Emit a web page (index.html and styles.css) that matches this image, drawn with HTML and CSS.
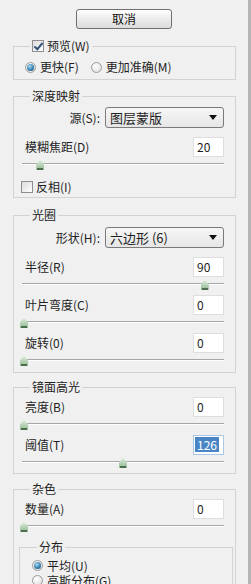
FILE: index.html
```html
<!DOCTYPE html>
<html lang="zh-CN">
<head>
    <meta charset="UTF-8">
    <meta name="viewport" content="width=device-width, initial-scale=1.0">
    <title>镜头模糊</title>
    <link rel="stylesheet" href="styles.css">
</head>
<body>
    <div class="dialog">
        <div class="top">
            <button class="btn">取消</button>
        </div>

        <fieldset class="group first">
            <legend><span class="check on"></span>预览(W)</legend>
            <div class="radios">
                <span class="opt"><span class="radio on"></span>更快(F)</span>
                <span class="opt"><span class="radio"></span>更加准确(M)</span>
            </div>
        </fieldset>

        <fieldset class="group depth">
            <legend>深度映射</legend>
            <div class="pick">
                <span class="pick-label">源(S):</span>
                <div class="select"><span>图层蒙版</span><span class="arrow"></span></div>
            </div>
            <div class="row gap"><span>模糊焦距(D)</span><span class="num">20</span></div>
            <div class="slider"><span class="thumb" style="left: 9%"></span></div>
            <div class="opt invert"><span class="check"></span>反相(I)</div>
        </fieldset>

        <fieldset class="group iris">
            <legend>光圈</legend>
            <div class="pick">
                <span class="pick-label">形状(H):</span>
                <div class="select"><span>六边形 (6)</span><span class="arrow"></span></div>
            </div>
            <div class="row gap"><span>半径(R)</span><span class="num">90</span></div>
            <div class="slider"><span class="thumb" style="left: 90.5%"></span></div>
            <div class="row"><span>叶片弯度(C)</span><span class="num">0</span></div>
            <div class="slider"><span class="thumb" style="left: 1%"></span></div>
            <div class="row"><span>旋转(0)</span><span class="num">0</span></div>
            <div class="slider"><span class="thumb" style="left: 1%"></span></div>
        </fieldset>

        <fieldset class="group specular">
            <legend>镜面高光</legend>
            <div class="row"><span>亮度(B)</span><span class="num">0</span></div>
            <div class="slider"><span class="thumb" style="left: 1%"></span></div>
            <div class="row"><span>阈值(T)</span><span class="num focus"><span class="sel">126</span></span></div>
            <div class="slider"><span class="thumb" style="left: 50%"></span></div>
        </fieldset>

        <fieldset class="group noise">
            <legend>杂色</legend>
            <div class="row"><span>数量(A)</span><span class="num">0</span></div>
            <div class="slider"><span class="thumb" style="left: 1%"></span></div>
            <fieldset class="group inner">
                <legend>分布</legend>
                <div class="opt"><span class="radio on"></span>平均(U)</div>
                <div class="opt"><span class="radio"></span>高斯分布(G)</div>
            </fieldset>
        </fieldset>
    </div>
</body>
</html>
```

FILE: styles.css
```css
body {
    margin: 0;
    background-color: #f0f0f0;
    font-family: "Noto Sans CJK SC", "Noto Sans", sans-serif;
    font-size: 12px;
    line-height: 14px;
    color: #1e1e1e;
    overflow: hidden;
}
.dialog {
    width: 248px;
    height: 584px;
    overflow: hidden;
    border-right: 3px solid #b4b4b4;
}
.top {
    padding: 9px 0 0 76px;
    height: 20px;
}
.btn {
    display: block;
    width: 96px;
    height: 20px;
    padding: 0;
    font: inherit;
    line-height: 18px;
    color: #111;
    background: linear-gradient(#ffffff, #ececec 50%, #dcdcdc);
    border: 1px solid #707070;
    border-radius: 3px;
}
.group {
    box-sizing: border-box;
    width: 223px;
    margin: 10px 0 0 13px;
    padding: 0 11px;
    border: 1px solid #d2d2d2;
    min-inline-size: 0;
}
.group legend {
    display: flex;
    align-items: center;
    height: 14px;
    line-height: 14px;
    margin-left: 5px;
    padding: 0 2px;
}
.first { padding-top: 6px; padding-bottom: 4px; }
.depth { margin-top: 9px; padding-top: 4px; padding-bottom: 3px; }
.iris { padding-top: 5px; padding-bottom: 1px; }
.specular { margin-top: 7px; padding-top: 3px; }
.noise { margin-top: 8px; padding-top: 3px; height: 120px; }
.inner {
    width: 214px;
    margin: 3px 0 0 -6px;
    padding: 4px 12px 0;
    height: 80px;
}

.radios {
    display: flex;
    height: 16px;
    align-items: center;
}
.opt {
    display: flex;
    align-items: center;
    height: 15px;
    line-height: 14px;
    margin-right: 12px;
}
.radio {
    position: relative;
    box-sizing: border-box;
    width: 11px;
    height: 11px;
    margin-right: 4px;
    border: 1px solid #9c9c9c;
    border-radius: 50%;
    background: radial-gradient(circle at 40% 35%, #ffffff, #d8d8d8);
}
.radio.on::after {
    content: "";
    position: absolute;
    left: 1px;
    top: 1px;
    width: 7px;
    height: 7px;
    border-radius: 50%;
    background: radial-gradient(circle at 40% 35%, #a9dcf2, #2f7aa8 60%, #1b4e72);
}
.check {
    position: relative;
    box-sizing: border-box;
    width: 12px;
    height: 12px;
    margin-right: 3px;
    border: 1px solid #8e8e8e;
    background: linear-gradient(135deg, #dcdcdc, #ffffff);
}
.check.on::after {
    content: "";
    position: absolute;
    left: 3px;
    top: 0;
    width: 3px;
    height: 7px;
    border: solid #34527a;
    border-width: 0 2px 2px 0;
    transform: rotate(40deg);
}
.invert {
    margin: 5px 0 0 -4px;
    height: 14px;
}

.pick {
    display: flex;
    align-items: center;
    height: 21px;
}
.pick-label {
    width: 75px;
    text-align: right;
    margin-right: 5px;
}
.select {
    flex: 1;
    display: flex;
    align-items: center;
    justify-content: space-between;
    height: 21px;
    box-sizing: border-box;
    padding: 0 6px 0 4px;
    border: 1px solid #7a7a7a;
    border-radius: 3px;
    background: linear-gradient(#f6f6f6, #e6e6e6);
    font-size: 13px;
}
.arrow {
    width: 0;
    height: 0;
    border-left: 4px solid transparent;
    border-right: 4px solid transparent;
    border-top: 5px solid #111;
}

.row {
    display: flex;
    align-items: center;
    justify-content: space-between;
    height: 20px;
}
.row.gap {
    margin-top: 9px;
}
.num {
    box-sizing: border-box;
    width: 31px;
    height: 20px;
    padding: 0 3px;
    line-height: 18px;
    background-color: #ffffff;
    border: 1px solid #dedede;
}
.num.focus {
    border-color: #a9c8e6;
    padding: 0 1px;
}
.sel {
    display: inline-block;
    line-height: 15px;
    padding: 0 2px;
    color: #ffffff;
    background-color: #4a86c5;
}

.slider {
    position: relative;
    height: 18px;
    margin: 0 0 0 -3px;
}
.slider::before {
    content: "";
    position: absolute;
    left: 0;
    right: 0;
    top: 6px;
    height: 1px;
    background-color: #a6a6a6;
    border-bottom: 1px solid #ffffff;
}
.thumb {
    position: absolute;
    top: 3px;
    width: 8px;
    height: 10px;
    margin-left: -4px;
    background: linear-gradient(#dbeedb, #93b893);
    clip-path: polygon(50% 0, 100% 40%, 100% 100%, 0 100%, 0 40%);
}
.thumb::after {
    content: "";
    position: absolute;
    left: 1px;
    right: 1px;
    bottom: 0;
    height: 2px;
    background-color: #4d6f4d;
}
```
